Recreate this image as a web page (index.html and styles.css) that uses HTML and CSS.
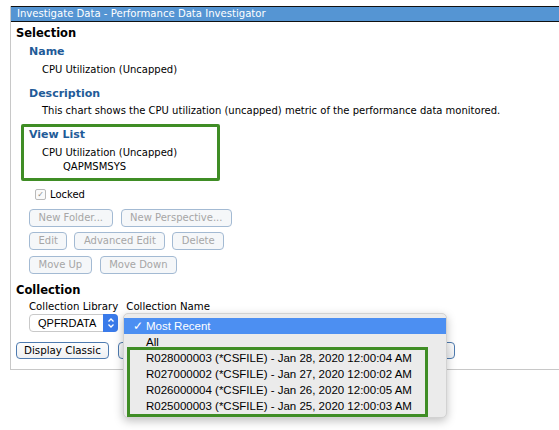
FILE: index.html
```html
<!DOCTYPE html>
<html>
<head>
<meta charset="utf-8">
<link rel="stylesheet" href="styles.css">
</head>
<body>
<div class="window">
  <div class="titlebar">Investigate Data - Performance Data Investigator</div>
  <div class="content">
    <div class="section-title">Selection</div>
    <div class="label label-name">Name</div>
    <div class="value">CPU Utilization (Uncapped)</div>
    <div class="label label-desc">Description</div>
    <div class="value">This chart shows the CPU utilization (uncapped) metric of the performance data monitored.</div>
    <div class="viewlist">
      <div class="label">View List</div>
      <div class="tree-item">CPU Utilization (Uncapped)</div>
      <div class="tree-sub">QAPMSMSYS</div>
    </div>
    <div class="locked"><span class="checkbox">&#10003;</span><span>Locked</span></div>
    <div class="btnrow row1"><span class="btn disabled">New Folder...</span><span class="btn disabled">New Perspective...</span></div>
    <div class="btnrow row2"><span class="btn disabled">Edit</span><span class="btn disabled">Advanced Edit</span><span class="btn disabled">Delete</span></div>
    <div class="btnrow row3"><span class="btn disabled">Move Up</span><span class="btn disabled">Move Down</span></div>
    <div class="section-title collection">Collection</div>
    <div class="fields">
      <div class="field">
        <div class="field-label">Collection Library</div>
        <div class="select lib"><span class="sel-text">QPFRDATA</span><span class="stepper"><svg width="8" height="12" viewBox="0 0 8 12"><path d="M1.5 4.5 L4 2 L6.5 4.5 M1.5 7.5 L4 10 L6.5 7.5" fill="none" stroke="#fff" stroke-width="1.3"/></svg></span></div>
      </div>
      <div class="field">
        <div class="field-label">Collection Name</div>
        <div class="select name"></div>
      </div>
    </div>
    <div class="btnrow bottom"><span class="btn">Display Classic</span><span class="btn hidden1"></span><span class="btn hidden2"></span></div>
  </div>
</div>
<div class="popup">
  <div class="opt selected"><span class="check">&#10003;</span>Most Recent</div>
  <div class="opt">All</div>
  <div class="popup-green">
    <div class="opt">R028000003 (*CSFILE) - Jan 28, 2020 12:00:04 AM</div>
    <div class="opt">R027000002 (*CSFILE) - Jan 27, 2020 12:00:02 AM</div>
    <div class="opt">R026000004 (*CSFILE) - Jan 26, 2020 12:00:05 AM</div>
    <div class="opt">R025000003 (*CSFILE) - Jan 25, 2020 12:00:03 AM</div>
  </div>
</div>
</body>
</html>
```
FILE: styles.css
```css
html, body {
  margin: 0;
  padding: 0;
  background: #fff;
}
body {
  font-family: "DejaVu Sans", Verdana, sans-serif;
  font-size: 10px;
  color: #000;
  position: relative;
  width: 559px;
  height: 430px;
  overflow: hidden;
}
.window {
  margin: 6px 0 0 10px;
  border-left: 1px solid #c8c8c8;
  border-bottom: 1px solid #c8c8c8;
  height: 364px;
  box-sizing: border-box;
}
.titlebar {
  background: #5595d3;
  border-top: 1px solid #111;
  border-bottom: 1px solid #111;
  color: #fff;
  height: 14px;
  line-height: 14px;
  padding-left: 6px;
  font-size: 10.1px;
}
.content {
  padding: 4px 0 0 5px;
}
.section-title {
  font-weight: bold;
  font-size: 11.5px;
  line-height: 14px;
  height: 14px;
}
.label {
  color: #1f5b98;
  font-weight: bold;
  font-size: 11px;
  line-height: 14px;
  height: 14px;
}
.label-name { margin: 5px 0 0 13px; }
.label-desc { margin: 10px 0 0 13px; }
.value {
  margin: 4px 0 0 26px;
  line-height: 14px;
  height: 14px;
}
.label-desc + .value { margin-top: 3px; }
.viewlist {
  margin: 6px 0 0 5px;
  width: 188px;
  border: 3px solid #3f8d25;
  padding: 1px 0 4px 5px;
  box-sizing: content-box;
  height: 46px;
  border-radius: 2px;
}
.tree-item {
  margin: 4px 0 0 13px;
  line-height: 14px;
}
.tree-sub {
  margin-left: 34px;
  line-height: 14px;
}
.locked {
  display: flex;
  align-items: center;
  margin: 7px 0 0 19px;
  height: 13px;
}
.checkbox {
  width: 9px;
  height: 9px;
  border: 1px solid #b9b9b9;
  border-radius: 2px;
  font-size: 8px;
  line-height: 9px;
  text-align: center;
  color: #8a8a8a;
  margin-right: 4px;
  background: #fafafa;
}
.btnrow {
  display: flex;
  gap: 7px;
  margin-left: 13px;
}
.row1 { margin-top: 8px; gap: 8px; }
.row2 { margin-top: 5px; }
.row3 { margin-top: 6px; gap: 8px; }
.btn {
  box-sizing: border-box;
  height: 18px;
  line-height: 16px;
  border: 1px solid #4e7bb0;
  border-radius: 4px;
  padding: 0 8.5px;
  background: linear-gradient(#fdfdfd, #eef0f3);
  font-size: 10px;
  white-space: nowrap;
}
.btn.disabled {
  border-color: #a3bad3;
  color: #a6a6a6;
  background: #f5f7f9;
}
.collection { margin-top: 9px; }
.fields {
  display: flex;
  gap: 8px;
  margin: 3px 0 0 13px;
}
.field-label {
  line-height: 14px;
  height: 14px;
  font-size: 10.2px;
}
.select {
  margin-top: 0;
  height: 18px;
  box-sizing: border-box;
  border: 1px solid #c9c9c9;
  border-radius: 4px;
  background: #fff;
  display: flex;
  align-items: center;
}
.select.lib { width: 89px; }
.select.name { width: 304px; border-color: #8fb4ea; }
.sel-text {
  flex: 1;
  padding-left: 8px;
  font-family: "Liberation Sans", Arial, sans-serif;
  font-size: 11px;
}
.stepper {
  width: 15px;
  height: 18px;
  margin: -1px -1px -1px 0;
  background: #3a7bea;
  border-radius: 0 4px 4px 0;
  display: flex;
  align-items: center;
  justify-content: center;
}
.bottom {
  margin: 10px 0 0 0;
  gap: 9px;
}
.bottom .btn { height: 17px; line-height: 15px; font-size: 10.3px; padding: 0 7px; }
.hidden1 { width: 160px; }
.hidden2 { width: 168px; }
.popup {
  position: absolute;
  left: 123px;
  top: 313px;
  width: 324px;
  height: 105px;
  box-sizing: border-box;
  background: #ebebeb;
  border: 1px solid #d2d2d2;
  border-radius: 5px;
  box-shadow: 0 3px 10px rgba(0,0,0,0.25);
  padding-top: 4px;
  font-family: "Liberation Sans", Arial, sans-serif;
  font-size: 11.5px;
}
.opt {
  height: 16px;
  line-height: 16px;
  padding-left: 22px;
  position: relative;
}
.opt.selected {
  background: #4c8ff2;
  color: #fff;
}
.check {
  position: absolute;
  left: 9px;
  top: 0;
}
.popup-green {
  margin: -3px 18px 0 3px;
  border: 3px solid #3f8d25;
  padding: 0;
}
.popup-green .opt { padding-left: 16px; }
```
